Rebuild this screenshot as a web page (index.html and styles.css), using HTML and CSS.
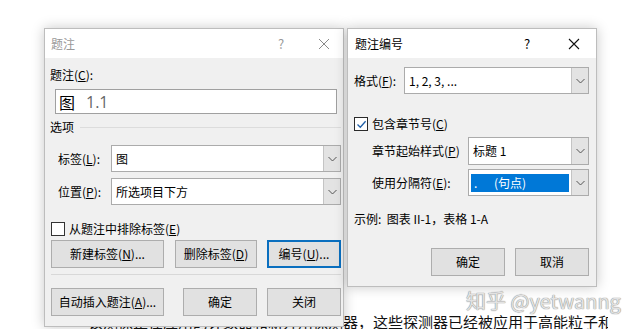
FILE: index.html
```html
<!DOCTYPE html>
<html>
<head>
  <title>题注</title>
  <link rel="stylesheet" href="styles.css">
</head>
<body>
  <p class="doc-line">该测探正在应用的计数器和新开用探测器，这些探测器已经被应用于高能粒子和</p>

  <div class="dlg dlg-caption">
    <div class="titlebar inactive">
      <span class="title">题注</span>
      <span class="help">?</span>
      <span class="close">
        <svg width="12" height="12" viewBox="0 0 12 12"><path d="M1 1L11 11M11 1L1 11" stroke="#8a8a8a" stroke-width="1"/></svg>
      </span>
    </div>
    <div class="body">
      <div class="label-line">题注(<u>C</u>):</div>
      <div class="caption-input"><span class="fig">图</span><span class="num">1.1</span></div>
      <div class="group-head"><span>选项</span><span class="rule"></span></div>

      <div class="field-row">
        <span class="field-label">标签(<u>L</u>):</span>
        <div class="select"><span class="value">图</span><span class="drop"><svg width="9" height="6" viewBox="0 0 9 6"><path d="M0.5 1L4.5 5L8.5 1" fill="none" stroke="#555"/></svg></span></div>
      </div>
      <div class="field-row second">
        <span class="field-label">位置(<u>P</u>):</span>
        <div class="select"><span class="value">所选项目下方</span><span class="drop"><svg width="9" height="6" viewBox="0 0 9 6"><path d="M0.5 1L4.5 5L8.5 1" fill="none" stroke="#555"/></svg></span></div>
      </div>

      <div class="check-row">
        <span class="box"></span>
        <span>从题注中排除标签(<u>E</u>)</span>
      </div>

      <div class="btn-row first">
        <span class="btn w-wide">新建标签(<u>N</u>)...</span>
        <span class="btn w-mid">删除标签(<u>D</u>)</span>
        <span class="btn w-std focus">编号(<u>U</u>)...</span>
      </div>
      <div class="sep"></div>
      <div class="btn-row last">
        <span class="btn w-wide">自动插入题注(<u>A</u>)...</span>
        <span class="btn w-std gap-ok">确定</span>
        <span class="btn w-std">关闭</span>
      </div>
    </div>
  </div>

  <div class="dlg dlg-number">
    <div class="titlebar">
      <span class="title">题注编号</span>
      <span class="help">?</span>
      <span class="close">
        <svg width="12" height="12" viewBox="0 0 12 12"><path d="M1 1L11 11M11 1L1 11" stroke="#111" stroke-width="1.1"/></svg>
      </span>
    </div>
    <div class="body">
      <div class="format-row">
        <span class="format-label">格式(<u>F</u>):</span>
        <div class="select"><span class="value">1, 2, 3, ...</span><span class="drop"><svg width="9" height="6" viewBox="0 0 9 6"><path d="M0.5 1L4.5 5L8.5 1" fill="none" stroke="#555"/></svg></span></div>
      </div>

      <div class="check-row checked">
        <span class="box">
          <svg width="11" height="11" viewBox="0 0 11 11"><path d="M1.5 5.5L4.3 8.3L9.6 2.2" fill="none" stroke="#1f5fa8" stroke-width="1.3"/></svg>
        </span>
        <span>包含章节号(<u>C</u>)</span>
      </div>

      <div class="chap-row">
        <span class="chap-label">章节起始样式(<u>P</u>)</span>
        <div class="select"><span class="value">标题 1</span><span class="drop"><svg width="9" height="6" viewBox="0 0 9 6"><path d="M0.5 1L4.5 5L8.5 1" fill="none" stroke="#555"/></svg></span></div>
      </div>
      <div class="chap-row second">
        <span class="chap-label">使用分隔符(<u>E</u>):</span>
        <div class="select"><span class="value picked"><span class="dot">.</span>(句点)</span><span class="drop"><svg width="9" height="6" viewBox="0 0 9 6"><path d="M0.5 1L4.5 5L8.5 1" fill="none" stroke="#555"/></svg></span></div>
      </div>

      <div class="sample">示例:&nbsp; 图表 II-1，表格 1-A</div>

      <div class="btn-row right">
        <span class="btn w-std">确定</span>
        <span class="btn w-std">取消</span>
      </div>
    </div>
  </div>

  <div class="watermark">知乎 @yetwanng</div>
</body>
</html>
```

FILE: styles.css
```css
html {
  overflow: hidden;
}
body {
  margin: 0;
  width: 626px;
  height: 329px;
  overflow: hidden;
  position: relative;
  background-color: #fff;
  font-family: "Noto Sans CJK SC", sans-serif;
  color: #000;
}
u {
  text-decoration: underline;
  text-underline-offset: 1px;
}

.doc-line {
  margin: 0 0 0 88px;
  padding-top: 312px;
  width: 520px;
  overflow: hidden;
  font-size: 15px;
  line-height: 20px;
  white-space: nowrap;
  color: #111;
}

/* dialogs */
.dlg {
  position: absolute;
  background-color: #f0f0f0;
  border: 1px solid #bdbdbd;
  box-shadow: 0 0 12px rgba(0, 0, 0, 0.22);
  font-size: 12px;
  line-height: 16px;
}
.dlg-caption {
  left: 44px;
  top: 28px;
  width: 298px;
  height: 297px;
}
.dlg-number {
  left: 347px;
  top: 28px;
  width: 248px;
  height: 257px;
}

.titlebar {
  height: 29px;
  background-color: #fff;
  display: flex;
  align-items: center;
  padding-left: 6px;
  font-size: 12px;
}
.titlebar .title {
  flex: 1;
}
.titlebar .help {
  width: 20px;
  text-align: center;
  font-size: 13px;
}
.titlebar .close {
  width: 20px;
  height: 12px;
  display: flex;
  justify-content: center;
}
.titlebar.inactive {
  color: #999;
}
.titlebar.inactive .help {
  margin-right: 23px;
}
.titlebar.inactive .close {
  margin-right: 9px;
}
.dlg-number .titlebar {
  padding-left: 7px;
}
.dlg-number .help {
  margin-right: 27px;
}
.dlg-number .close {
  margin-right: 12px;
}

.body {
  padding: 0 2px 0 5px;
}
.dlg-number .body {
  padding: 0 7px 0 6px;
}

.label-line {
  margin-top: 9px;
}
.caption-input {
  margin: 6px 4px 0 5px;
  height: 23px;
  border: 1px solid #a0a0a0;
  background-color: #fff;
  display: flex;
  align-items: center;
  font-size: 16px;
  line-height: 20px;
}
.caption-input .fig {
  margin-left: 3px;
  font-family: "Noto Sans CJK SC", serif;
}
.caption-input .num {
  margin-left: 11px;
  color: #666;
  font-family: "Open Sans", sans-serif;
}

.group-head {
  margin-top: 5px;
  display: flex;
  align-items: center;
}
.group-head .rule {
  flex: 1;
  height: 1px;
  margin-left: 6px;
  background-color: #dcdcdc;
}

.field-row {
  margin-top: 10px;
  display: flex;
  align-items: center;
}
.field-row.second {
  margin-top: 6px;
}
.field-label {
  width: 53px;
  padding-left: 8px;
}

.select {
  flex: 1;
  height: 25px;
  border: 1px solid #ababab;
  background-color: #fff;
  display: flex;
}
.select .value {
  flex: 1;
  padding-left: 4px;
  display: flex;
  align-items: center;
}
.select .drop {
  width: 16px;
  background-color: #e3e3e3;
  border-left: 1px solid #c4c4c4;
  display: flex;
  align-items: center;
  justify-content: center;
}
.select .value.picked {
  margin: 4px 2px 3px 2px;
  padding-left: 3px;
  background-color: #0078d7;
  color: #fff;
}
.picked .dot {
  width: 20px;
}

.check-row {
  margin-top: 17px;
  display: flex;
  align-items: center;
  height: 14px;
}
.check-row .box {
  width: 12px;
  height: 12px;
  margin: 0 4px 0 1px;
  border: 1px solid #333;
  background-color: #fff;
  display: flex;
  align-items: center;
  justify-content: center;
}
.check-row.checked {
  margin-top: 23px;
}
.check-row.checked .box {
  margin-left: 0;
  border-color: #2a2a2a;
}

.btn-row {
  display: flex;
}
.btn-row.first {
  margin-top: 4px;
}
.btn-row.last {
  margin-top: 13px;
}
.btn {
  height: 26px;
  border: 1px solid #adadad;
  background-color: #e1e1e1;
  display: flex;
  align-items: center;
  justify-content: center;
  box-sizing: content-box;
}
.btn-row .btn + .btn {
  margin-left: 10px;
}
.btn-row.first .btn:first-child,
.btn-row.last .btn:first-child {
  margin-left: 1px;
}
.btn-row.first .w-mid {
  margin-left: 11px;
}
.btn-row.last .gap-ok {
  margin-left: 19px;
}
.w-wide {
  width: 111px;
}
.w-mid {
  width: 80px;
}
.w-std {
  width: 72px;
}
.btn.focus {
  border: 2px solid #0a6fbf;
  width: 70px;
  height: 24px;
}
.sep {
  margin: 6px 0 0 1px;
  height: 1px;
  background-color: #d8d8d8;
}

/* numbering dialog */
.format-row {
  margin-top: 9px;
  display: flex;
  align-items: center;
}
.format-label {
  width: 50px;
}
.format-row .select {
  height: 25px;
}
.chap-row {
  margin-top: 6px;
  display: flex;
  align-items: center;
  padding-left: 18px;
}
.chap-row.second {
  margin-top: 4px;
}
.chap-label {
  width: 96px;
}
.chap-row .select {
  height: 26px;
}
.chap-row.second .select {
  height: 25px;
}
.sample {
  margin-top: 15px;
}
.btn-row.right {
  margin-top: 21px;
  justify-content: flex-end;
}

.watermark {
  position: absolute;
  left: 466px;
  top: 289px;
  font-size: 20px;
  line-height: 24px;
  color: #e2e2e2;
  text-shadow: 0 0 1px #8c8c8c, 0 0 1px #8c8c8c;
  white-space: nowrap;
}
```
